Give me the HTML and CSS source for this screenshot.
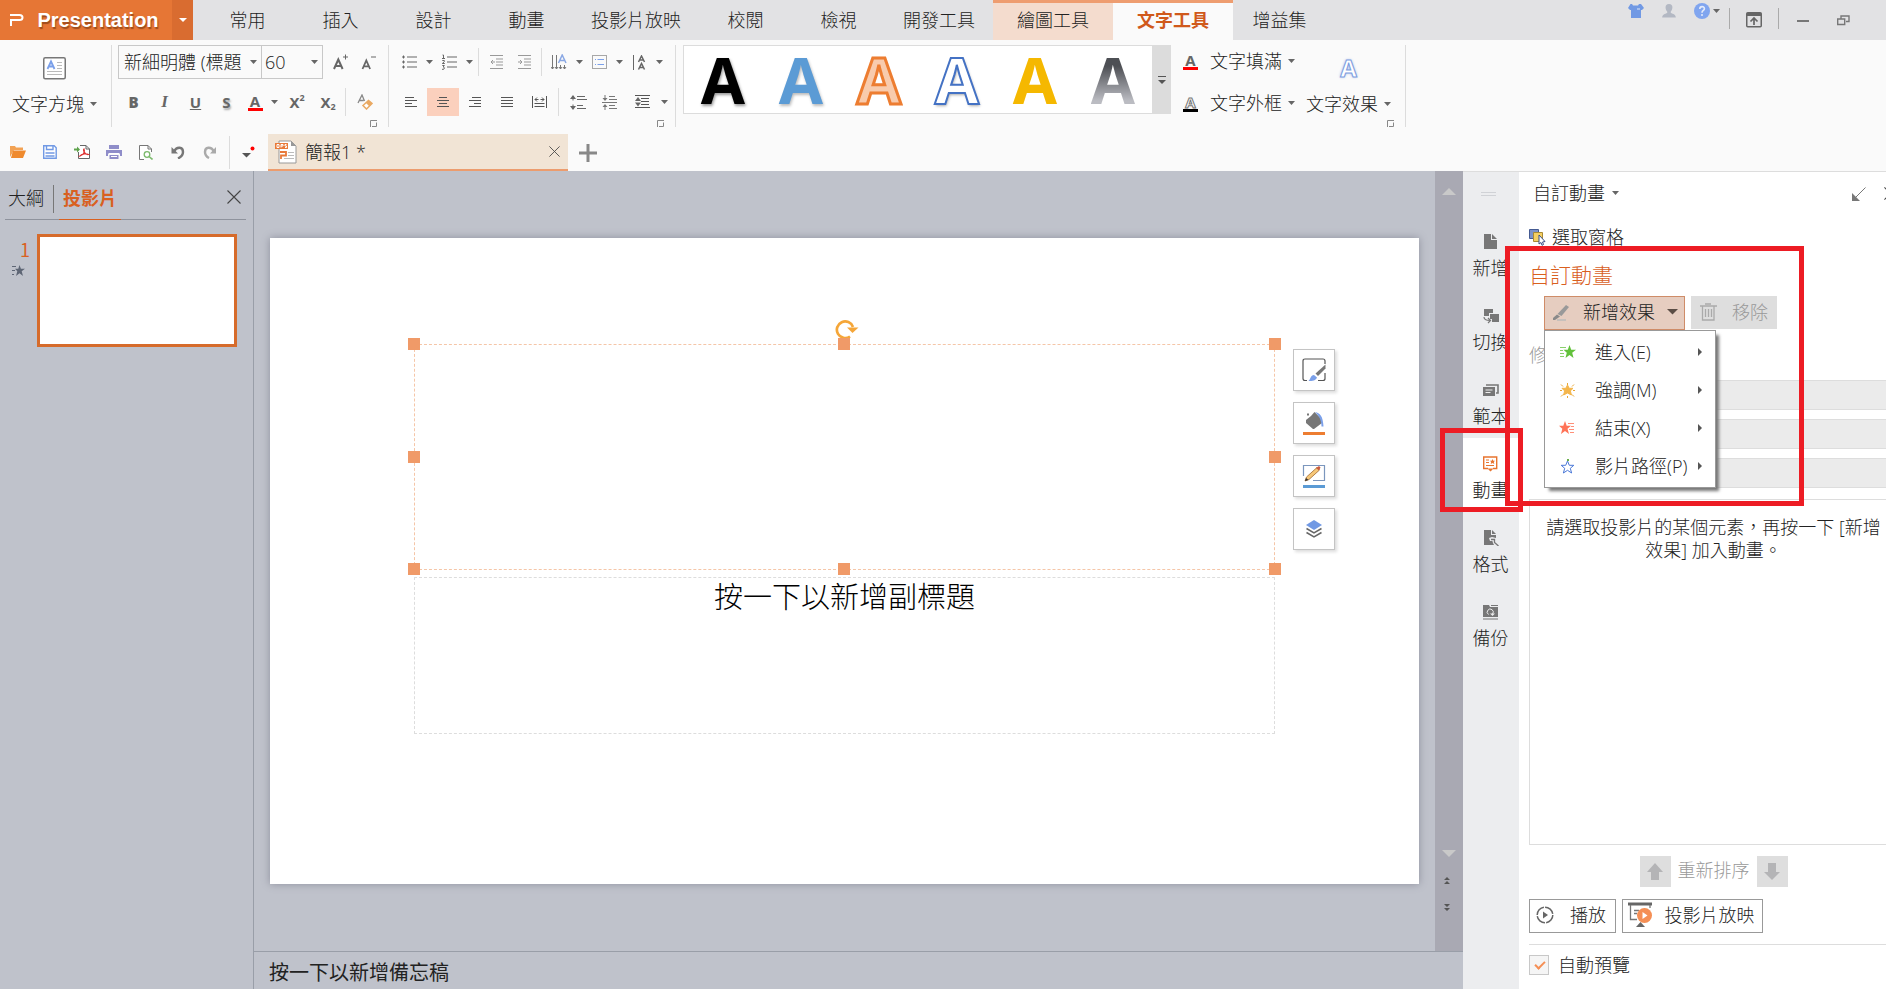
FILE: index.html
```html
<!DOCTYPE html>
<html lang="zh-Hant">
<head>
<meta charset="utf-8">
<title>Presentation</title>
<link rel="stylesheet" href="styles.css">
</head>
<body>
<svg class="sprite" aria-hidden="true">
  <symbol id="caret" viewBox="0 0 7 4"><path d="M0 0h7L3.5 4z" fill="#666"/></symbol>
  <symbol id="launch" viewBox="0 0 7 7"><path d="M.5 7V.5H7M6.5 2.500V6.5H2" fill="none" stroke="#888"/></symbol>
  <symbol id="close" viewBox="0 0 14 14"><path d="M.5.5l13 13M13.5.5l-13 13" fill="none" stroke="#444" stroke-width="1.100"/></symbol>
</svg>

<header class="titlebar">
  <button class="brand"><svg width="16" height="14" viewBox="0 0 16 14"><path d="M1 2h9.500c4 0 4 5 0 5H2v6" fill="none" stroke="#fff" stroke-width="2"/></svg><span>Presentation</span></button>
  <button class="brand-more" aria-label="選單"><svg width="8" height="4" viewBox="0 0 8 4"><path d="M0 0h8L4 4z" fill="#fff"/></svg></button>
  <nav class="tabs">
    <button class="tab">常用</button>
    <button class="tab">插入</button>
    <button class="tab">設計</button>
    <button class="tab">動畫</button>
    <button class="tab">投影片放映</button>
    <button class="tab">校閱</button>
    <button class="tab">檢視</button>
    <button class="tab">開發工具</button>
    <button class="tab tab-context">繪圖工具</button>
    <button class="tab tab-context tab-active">文字工具</button>
    <button class="tab">增益集</button>
  </nav>
  <div class="window-tools">
    <div class="account">
      <button aria-label="外觀"><svg width="16" height="15" viewBox="0 0 16 15"><path d="M4 0l1 1.500h5L11 0h2l3 4-2 2h-1v8H3V6H2L0 4l2.500-4z" fill="#7199e4"/><path d="M9 5h3" stroke="#dfe6f5"/></svg></button>
      <button aria-label="帳戶"><svg width="14" height="14" viewBox="0 0 14 14"><path d="M7 0c5 0 3.500 6 1.800 7.500V9c2.500.8 5 1.800 5 4.500H.2C.2 10.800 3 9.800 5.200 9V7.500C3.500 6 2 0 7 0z" fill="#b3b8c3"/></svg></button>
      <button class="help" aria-label="說明"><svg width="16" height="16" viewBox="0 0 16 16"><circle cx="8" cy="8" r="8" fill="#80a5ef"/><path d="M5.800 6c0-3.200 4.600-3 4.600-.3C10.400 7.500 8 7.400 8 9.700" fill="none" stroke="#e4ebfa" stroke-width="1.600"/><circle cx="8" cy="12" r="1" fill="#e4ebfa"/></svg><svg width="7" height="4"><use href="#caret"/></svg></button>
    </div>
    <i class="bar"></i>
    <button class="collapse" aria-label="收合功能區"><svg width="16" height="16" viewBox="0 0 16 16"><rect x=".75" y=".75" width="14.500" height="14" rx="1" fill="none" stroke="#666" stroke-width="1.500"/><path d="M1 2.500h14" stroke="#666" stroke-width="3"/><path d="M8 13V7M4.500 9.500L8 6l3.500 3.500" fill="none" stroke="#666" stroke-width="1.700"/></svg></button>
    <i class="bar"></i>
    <button class="minimize" aria-label="最小化"><svg width="12" height="2"><path d="M0 1h12" stroke="#777" stroke-width="2"/></svg></button>
    <button class="restore" aria-label="還原"><svg width="13" height="11" viewBox="0 0 13 11"><path d="M.7 4h7v5.500h-7zM4 3.500V1h8v5.500H9" fill="none" stroke="#777" stroke-width="1.400"/></svg></button>
  </div>
</header>

<section class="ribbon">
  <div class="group group-box">
    <button class="stacked"><svg width="24" height="23" viewBox="0 0 24 23"><rect x=".75" y=".75" width="21.500" height="21" rx="1.500" fill="#fff" stroke="#777" stroke-width="1.500"/><path d="M4.500 12L8 4.500 11.500 12M5.700 9.500h4.600" fill="none" stroke="#7ba0ea" stroke-width="1.800"/><path d="M14 5.500h5M14 8.500h5M14 11.500h5M4 14.500h15M4 17.500h15" stroke="#bbb"/></svg>
    <span class="label">文字方塊<svg width="7" height="4"><use href="#caret"/></svg></span></button>
  </div>

  <div class="group">
    <div class="row row-top">
      <label class="combo combo-font"><select aria-label="字型"><option>新細明體 (標題</option></select><svg width="7" height="4"><use href="#caret"/></svg></label>
      <label class="combo combo-size"><select aria-label="字型大小"><option>60</option></select><svg width="7" height="4"><use href="#caret"/></svg></label>
      <button class="tool narrow pushed" aria-label="放大字型"><svg width="16" height="16" viewBox="0 0 16 16"><path d="M1 15L5.300 5.500 9.600 15M2.800 12h5" fill="none" stroke="#666" stroke-width="2"/><path d="M10 3h5M12.500.5v5" stroke="#666"/></svg></button>
      <button class="tool narrow" aria-label="縮小字型"><svg width="16" height="16" viewBox="0 0 16 16"><path d="M1.500 15L5.300 6.500 9.100 15M3 12.300h4.500" fill="none" stroke="#666" stroke-width="1.800"/><path d="M10 3h5" stroke="#666"/></svg></button>
    </div>
    <div class="row">
      <button class="tool glyph"><b>B</b></button>
      <button class="tool glyph italic"><i>I</i></button>
      <button class="tool glyph"><u>U</u></button>
      <button class="tool glyph shadowed">S</button>
      <button class="tool fontcolor"><span class="swatch swatch-red">A</span></button>
      <button class="arrow" aria-label="字型色彩選項"><svg width="7" height="4"><use href="#caret"/></svg></button>
      <button class="tool glyph script">X<sup>2</sup></button>
      <button class="tool glyph script">X<sub>2</sub></button>
      <i class="sep"></i>
      <button class="tool" aria-label="清除格式"><svg width="16" height="16" viewBox="0 0 16 16"><path d="M1 9L5 1l2.500 6M2.500 6.500h4" fill="none" stroke="#888" stroke-width="1.300"/><path d="M6 11.500l5.500-5 3.500 3-5.500 5.500z" fill="#fff" stroke="#e9a963" stroke-width="1.500"/><path d="M9 9l3.500 3.500L15 9.500 11.500 6.500z" fill="#e9a963"/></svg></button>
    </div>
    <button class="launcher" aria-label="字型設定"><svg width="7" height="7"><use href="#launch"/></svg></button>
  </div>

  <div class="group">
    <div class="row row-top">
      <button class="tool narrow" aria-label="項目符號"><svg width="15" height="14" viewBox="0 0 15 14"><path d="M5 2h10M5 7h10M5 12h10M0 2h3M0 7h3M0 12h3M1.500.5v3M1.500 5.500v3M1.500 10.500v3" stroke="#666"/></svg></button>
      <button class="arrow" aria-label="項目符號選項"><svg width="7" height="4"><use href="#caret"/></svg></button>
      <button class="tool narrow" aria-label="編號"><svg width="15" height="16" viewBox="0 0 15 16"><path d="M5 3h10M5 8h10M5 13h10" stroke="#666"/><path d="M.5 1h1v3.500M0 4.500h3M.3 6.500h2v1.200l-2 1.800h2.500M.3 11.500h2L1.200 13l1.300.8-.8 1.500H0" fill="none" stroke="#666"/></svg></button>
      <button class="arrow" aria-label="編號選項"><svg width="7" height="4"><use href="#caret"/></svg></button>
      <i class="sep"></i>
      <button class="tool narrow" aria-label="減少縮排"><svg width="13" height="14" viewBox="0 0 13 14"><path d="M0 .5h13M6 4h7M6 7h7M6 10h7M0 13.500h13M1 7h4M3 5L1 7l2 2" fill="none" stroke="#999"/></svg></button>
      <button class="tool narrow" aria-label="增加縮排"><svg width="13" height="14" viewBox="0 0 13 14"><path d="M0 .5h13M6 4h7M6 7h7M6 10h7M0 13.500h13M0 7h4M2 5l2 2-2 2" fill="none" stroke="#999"/></svg></button>
      <i class="sep"></i>
      <button class="tool narrow" aria-label="文字方向"><svg width="16" height="16" viewBox="0 0 16 16"><path d="M1.500 1v14M5.500 1v14M9.500 11v4M13.500 11v4M0 13l1.500 2L3 13M4 13l1.500 2L7 13M8 13l1.500 2 1.500-2M12 13l1.500 2 1.500-2" fill="none" stroke="#777"/><path d="M7.500 9l3.700-8L15 9M9 6.500h4.500" fill="none" stroke="#8aa8e4" stroke-width="1.500"/></svg></button>
      <button class="arrow" aria-label="文字方向選項"><svg width="7" height="4"><use href="#caret"/></svg></button>
      <button class="tool narrow" aria-label="對齊文字"><svg width="15" height="14" viewBox="0 0 15 14"><rect x=".5" y=".5" width="14" height="13" fill="none" stroke="#555" stroke-dasharray="1 1"/><path d="M3 4.500h1M5.500 4.500H12M3 9.500h1M5.500 9.500H12" stroke="#7ba0ea"/></svg></button>
      <button class="arrow" aria-label="對齊文字選項"><svg width="7" height="4"><use href="#caret"/></svg></button>
      <button class="tool narrow" aria-label="直書"><svg width="13" height="15" viewBox="0 0 13 15"><path d="M.5 0v15" stroke="#666"/><path d="M5.500 7L8.500 1l3 6M6.500 5h4M5.500 14.500l3-6 3 6M6.500 12.500h4" fill="none" stroke="#666" stroke-width="1.500"/></svg></button>
      <button class="arrow" aria-label="直書選項"><svg width="7" height="4"><use href="#caret"/></svg></button>
    </div>
    <div class="row">
      <button class="tool" aria-label="靠左對齊"><svg width="12" height="11" viewBox="0 0 12 11"><path d="M0 .5h9M0 3.500h12M0 6.500h7M0 9.500h12" stroke="#555"/></svg></button>
      <button class="tool tool-on" aria-label="置中"><svg width="12" height="11" viewBox="0 0 12 11"><path d="M2 .5h8M0 3.500h12M2 6.500h8M0 9.500h12" stroke="#555"/></svg></button>
      <button class="tool" aria-label="靠右對齊"><svg width="12" height="11" viewBox="0 0 12 11"><path d="M3 .5h9M0 3.500h12M5 6.500h7M0 9.500h12" stroke="#555"/></svg></button>
      <button class="tool" aria-label="左右對齊"><svg width="12" height="11" viewBox="0 0 12 11"><path d="M0 .5h12M0 3.500h12M0 6.500h12M0 9.500h12" stroke="#555"/></svg></button>
      <button class="tool" aria-label="分散對齊"><svg width="15" height="12" viewBox="0 0 15 12"><path d="M.5 0v12M14.500 0v12M3 3.500h3.500M8.500 3.500H12M5 1.500L3 3.500l2 2M10 1.500l2 2-2 2M2.500 7.500h10M2.500 10.500h10" fill="none" stroke="#555"/></svg></button>
      <i class="sep"></i>
      <button class="tool" aria-label="行距"><svg width="17" height="15" viewBox="0 0 17 15"><path d="M7 1.500h8M7 4.500h10M7 10.500h6M7 13.500h9M3 1v4.500M3 9.500V14" stroke="#666"/><path d="M0 4l3-4 3 4zM0 11h6l-3 4z" fill="#666"/></svg></button>
      <button class="tool" aria-label="段落間距"><svg width="16" height="15" viewBox="0 0 16 15"><path d="M7 1.500h6M7 4.500h8M7 10.500h6M7 13.500h8M0 7.500h15M3 0v5M3 10v5" stroke="#777"/><path d="M.5 3h5L3 6zM.5 12h5L3 9z" fill="#777"/></svg></button>
      <button class="tool" aria-label="行間"><svg width="15" height="14" viewBox="0 0 15 14"><path d="M0 .5h15M6 3.500h8M6 6.500h8M6 9.500h8M0 12.500h15" stroke="#555"/><path d="M0 6l3-4 3 4zM0 7.500h6l-3 4z" fill="#666"/></svg></button>
      <button class="arrow" aria-label="行距選項"><svg width="7" height="4"><use href="#caret"/></svg></button>
    </div>
    <button class="launcher" aria-label="段落設定"><svg width="7" height="7"><use href="#launch"/></svg></button>
  </div>

  <div class="group">
    <div class="art-area">
      <div class="gallery">
        <div class="gallery-items">
          <button class="art art-black">A</button>
          <button class="art art-blue">A</button>
          <button class="art art-orange">A</button>
          <button class="art art-outline">A</button>
          <button class="art art-gold">A</button>
          <button class="art art-gray"><span>A</span></button>
        </div>
        <button class="gallery-more" aria-label="更多樣式"><svg width="8" height="8" viewBox="0 0 8 8"><path d="M0 .5h8" stroke="#555"/><path d="M0 4h8L4 8z" fill="#555"/></svg></button>
      </div>
      <div class="text-style">
        <button class="line-button"><span class="swatch swatch-red">A</span><span class="label">文字填滿<svg width="7" height="4"><use href="#caret"/></svg></span></button>
        <button class="line-button"><span class="swatch swatch-line">A</span><span class="label">文字外框<svg width="7" height="4"><use href="#caret"/></svg></span></button>
      </div>
      <button class="stacked effects"><span class="glow">A</span><span class="label">文字效果<svg width="7" height="4"><use href="#caret"/></svg></span></button>
    </div>
    <button class="launcher" aria-label="文字效果設定"><svg width="7" height="7"><use href="#launch"/></svg></button>
  </div>
</section>

<section class="docbar">
  <div class="quick">
    <button aria-label="開啟"><svg width="16" height="12" viewBox="0 0 16 12"><path d="M0 11V0h5l1 1.500h7V4H4z" fill="#f2a254"/><path d="M3 4.500h13L13 12H1z" fill="#ef8a2e"/></svg></button>
    <button aria-label="儲存"><svg width="14" height="14" viewBox="0 0 14 14"><path d="M.7.7h10.500l2 2v10.500H.7z" fill="#fff" stroke="#7199e4" stroke-width="1.400"/><path d="M3.500 1v3.500h6.500V1M2.500 8h9M2.500 11h9" fill="none" stroke="#7199e4" stroke-width="1.400"/></svg></button>
    <button aria-label="輸出為 PDF"><svg width="17" height="14" viewBox="0 0 17 14"><path d="M4.500 7v6.500h11V4l-3.500-3.500H6" fill="#fff" stroke="#666"/><path d="M12 .5V4h3.500" fill="none" stroke="#666"/><path d="M6 11c4-1 5-5 4-7-1.500 1 1 6 4.500 5.500C12 8 8 9 6 11z" fill="none" stroke="#d33" stroke-width="1.200"/><path d="M0 4.500h4" stroke="#5ea24c" stroke-width="2"/><path d="M3 1.500L6 4.500 3 7.500z" fill="#5ea24c"/></svg></button>
    <button aria-label="列印"><svg width="16" height="14" viewBox="0 0 16 14"><path d="M3 0h10v4H3zM0 5h16v6h-2V8.500H2V11H0zM3.500 10h9v4h-9z" fill="#8f8dc9"/><path d="M3 8.500h10M5 11.500h6" stroke="#fff"/></svg></button>
    <button aria-label="預覽列印"><svg width="14" height="15" viewBox="0 0 14 15"><path d="M5 14.500H.5V.5H9L12.500 4v3" fill="#fff" stroke="#777"/><path d="M9 .5V4h3.500" fill="none" stroke="#777"/><circle cx="8" cy="9.500" r="2.800" fill="none" stroke="#7cba6c" stroke-width="1.300"/><path d="M10 11.500l3.500 3" stroke="#7cba6c" stroke-width="1.600"/></svg></button>
    <button aria-label="復原"><svg width="14" height="13" viewBox="0 0 14 13"><path d="M3 5.500C6 0 12 1 12 6c0 3-2 5-5 6.500" fill="none" stroke="#777" stroke-width="2.400"/><path d="M.5 1v6.500H7z" fill="#777"/></svg></button>
    <button aria-label="重做"><svg width="14" height="13" viewBox="0 0 14 13"><path d="M11 5.500C8 0 2 1 2 6c0 3 2 5 4 6" fill="none" stroke="#aaa" stroke-width="2.400"/><path d="M13 1v6.500H7z" fill="#aaa"/></svg></button>
    <i class="sep sep-tall"></i>
    <button aria-label="自訂工具列"><svg width="13" height="12" viewBox="0 0 13 12"><path d="M0 7h9l-4.500 4.500z" fill="#555"/><circle cx="10.500" cy="2.500" r="2" fill="red"/></svg></button>
  </div>
  <div class="doc-tab">
    <svg width="22" height="24" viewBox="0 0 22 24"><path d="M4 1h12l5 5v17H4z" fill="#fff" stroke="#999"/><path d="M16 1v5h5z" fill="#999"/><rect x="0" y="3" width="13" height="6" fill="#e87a3a"/><path d="M2 4.500h2v3H2zM6 7.500v-3h2V6H6M11.500 4.500H10V6h1.500v1.500H10" fill="none" stroke="#fff"/><path d="M5 12h6v3.500H6V19" fill="none" stroke="#e87a3a" stroke-width="1.800"/><path d="M13 12.500h6M13 15.500h6M9 18.500h10" stroke="#bbb"/></svg>
    <span class="doc-name">簡報1 *</span>
    <button aria-label="關閉文件"><svg width="11" height="11"><use href="#close"/></svg></button>
  </div>
  <button class="add-doc" aria-label="新增文件"><svg width="18" height="18"><path d="M9 0v18M0 9h18" stroke="#888" stroke-width="3"/></svg></button>
</section>

<main class="body">
  <aside class="slides">
    <div class="slides-head">
      <button class="slides-tab">大綱</button>
      <button class="slides-tab slides-tab-on">投影片</button>
      <button class="slides-close" aria-label="關閉窗格"><svg width="14" height="14"><use href="#close"/></svg></button>
    </div>
    <div class="thumb-row">
      <div class="thumb-meta"><span>1</span><svg width="13" height="11" viewBox="0 0 13 11"><path d="M7.500 0l1.400 3.800H13l-3.300 2.500L11 11 7.500 8.200 4 11l1.300-4.700L3 3.800h3.300z" fill="#5e6675"/><path d="M0 1.500h4M0 5.500h3M0 9.500h2" stroke="#5e6675"/></svg></div>
      <div class="thumb"></div>
    </div>
  </aside>

  <section class="editor">
    <div class="stage">
      <div class="canvas">
        <div class="slide">
          <div class="title-box">
            <svg class="rotate" width="24" height="20" viewBox="0 0 24 20"><path d="M15 17.500A8.300 8.300 0 1 1 18 8" fill="none" stroke="#f5a638" stroke-width="2.700"/><path d="M12 8.500h11.500L17.500 14z" fill="#f5a638"/></svg>
            <i class="handle h-left v-top"></i><i class="handle h-mid v-top"></i><i class="handle h-right v-top"></i>
            <i class="handle h-left v-mid"></i><i class="handle h-right v-mid"></i>
            <i class="handle h-left v-bottom"></i><i class="handle h-mid v-bottom"></i><i class="handle h-right v-bottom"></i>
            <div class="float-tools">
              <button aria-label="樣式"><svg width="24" height="24" viewBox="0 0 24 24"><path d="M5 22.500H3q-2 0-2-2V3q0-2 2-2h18q2 0 2 2v3M23 15v5.500q0 2-2 2h-5" fill="none" stroke="#555" stroke-width="1.200"/><path d="M23.500 6.500v4L16 18l-2.500-2.500z" fill="#777"/><path d="M12 17l3 2.500c-1 3-4.500 3.500-8.500 3.500 2-1.500 2-6 5.500-6z" fill="#7ba0ea"/></svg></button>
              <button aria-label="填滿"><svg width="24" height="24" viewBox="0 0 24 24"><path d="M4 9l5-4 3.500-4L20 8.500V12l-8 6h-1l-7-6z" fill="#777"/><path d="M5 2.500h2v2H5z" fill="#777"/><path d="M13 1c5 1 8 4 8.500 14.500h-2C19.500 10 18 6 13 1z" fill="#7ba0ea"/><path d="M1 22.500h22" stroke="#ed7d31" stroke-width="3"/></svg></button>
              <button aria-label="外框"><svg width="24" height="24" viewBox="0 0 24 24"><path d="M1.500 12V1.500h21v15H11" fill="none" stroke="#7b96bd" stroke-width="1.200"/><path d="M3 17l1.500-4L15 3.500l2.500 2.500L7 15.500z" fill="#f6c778" stroke="#a06a30" stroke-width=".8"/><path d="M14 4L17 2l1.500 1.500L17 6.500z" fill="#c95b3f"/><path d="M3 17l1-3 2.500 2z" fill="#333"/><path d="M1 22.500h22" stroke="#5b9bd5" stroke-width="3"/></svg></button>
              <button aria-label="圖層"><svg width="18" height="18" viewBox="0 0 18 18"><path d="M9 0l8 5-8 5-8-5z" fill="#7199e4"/><path d="M1.500 8.500L9 13l7.500-4.500M1.500 12.500L9 17l7.500-4.500" fill="none" stroke="#666" stroke-width="1.500"/></svg></button>
            </div>
          </div>
          <div class="subtitle-box">按一下以新增副標題</div>
        </div>
      </div>
      <div class="scrollbar">
        <button aria-label="向上捲動"><svg width="14" height="7"><path d="M0 7l7-7 7 7z" fill="#c9c9c9"/></svg></button>
        <div class="scroll-end">
          <button aria-label="向下捲動"><svg width="14" height="7"><path d="M0 0h14L7 7z" fill="#c9c9c9"/></svg></button>
          <button class="step" aria-label="上一張"><svg width="6" height="7"><path d="M0 3l3-3 3 3zM0 7l3-3 3 3z" fill="#555"/></svg></button>
          <button class="step" aria-label="下一張"><svg width="6" height="7"><path d="M0 0h6L3 3zM0 4h6L3 7z" fill="#555"/></svg></button>
        </div>
      </div>
    </div>
    <div class="notes">按一下以新增備忘稿</div>
  </section>

  <div class="dock">
    <nav class="rail">
      <div class="grip"></div>
      <button class="rail-item"><svg width="15" height="16" viewBox="0 0 15 16"><path d="M1 0h7v6h6v9H1zM9 0l5 5H9z" fill="#777"/></svg>新增</button>
      <button class="rail-item"><svg width="16" height="16" viewBox="0 0 16 16"><path d="M1 1h9v4H6v3H1zM7 6h9v8H9v-3H7z" fill="#777"/><path d="M1 9c0 3 2 3.500 6 3.500M5 10l2.500 2.500L5 15" fill="none" stroke="#777" stroke-width="1.200"/></svg>切換</button>
      <button class="rail-item"><svg width="16" height="16" viewBox="0 0 16 16"><path d="M0 5h12v9H0z" fill="#777"/><path d="M3 3h12v8h-2" fill="none" stroke="#777" stroke-width="1.600"/><path d="M2.500 8h7M2.500 10.500h5" stroke="#eee"/></svg>範本</button>
      <button class="rail-item rail-on"><svg width="15" height="16" viewBox="0 0 15 16"><path d="M5 12.500H.7V1h13v11.500H10" fill="none" stroke="#e8742f" stroke-width="1.400"/><path d="M3 4h3M3 6.500h3M3 9.500h8" stroke="#e8742f"/><path d="M9.500 3l.8 1.700H12l-1.200 1.300.5 2-1.800-1-1.800 1 .5-2L7 4.700h1.700zM4.500 12.500h6l-3 3z" fill="#e8742f"/></svg>動畫</button>
      <button class="rail-item"><svg width="16" height="16" viewBox="0 0 16 16"><path d="M1 0h7v5h5v3l-4-1-3 1 1 3h2l2 4H1zM9 0l4 4H9z" fill="#777"/><path d="M8 9.500h3.500v3L15.500 16M7.500 12h2" fill="none" stroke="#777" stroke-width="1.300"/></svg>格式</button>
      <button class="rail-item"><svg width="16" height="16" viewBox="0 0 16 16"><path d="M0 1h6l1 2h8v10H0z" fill="#777"/><path d="M8 1.500h7M0 15h15" stroke="#777"/><path d="M5.500 10.500A3 3 0 1 1 9.500 10" fill="none" stroke="#eee"/><path d="M7 9.500h5l-2.500 2.500z" fill="#eee"/></svg>備份</button>
    </nav>
    <aside class="pane">
      <div class="pane-inner">
        <div class="pane-head">
          <button class="label">自訂動畫<svg width="7" height="4"><use href="#caret"/></svg></button>
          <button class="pin" aria-label="停駐"><svg width="14" height="14" viewBox="0 0 14 14"><path d="M13.500.5L3 11" stroke="#777"/><path d="M0 6l8 8H0z" fill="#777"/></svg></button>
          <button aria-label="關閉"><svg width="13" height="13"><use href="#close"/></svg></button>
        </div>
        <button class="select-pane"><svg width="17" height="17" viewBox="0 0 17 17"><path d="M.5.5h9v9h-9z" fill="#7d92c9" stroke="#445a92"/><path d="M4.500 3.500h9v9h-9z" fill="#f5cf62" stroke="#a98a35"/><path d="M10 6l6 6.500-2.500.5 1 2.500-1.500.8-1-2.800-2 1.500z" fill="#fff" stroke="#3b4f85"/></svg>選取窗格</button>
        <h2 class="pane-title">自訂動畫</h2>
        <div class="actions">
          <div class="add-wrap">
            <button class="add-effect"><svg width="16" height="17" viewBox="0 0 16 17"><path d="M13 1l3 2-7.500 9-4-2z" fill="#999"/><path d="M4 10.500l3 2L2 16H0v-2z" fill="#8a8a8a"/><path d="M4 16h9" stroke="#bbb" stroke-width="1.500"/></svg><span>新增效果</span><svg width="11" height="6"><path d="M0 0h11L5.500 5.500z" fill="#5b4d45"/></svg></button>
            <div class="menu" role="menu">
              <button role="menuitem"><svg width="17" height="14" viewBox="0 0 17 14"><path d="M10.500 0l1.700 4.800H17l-3.800 3L14.500 13l-4-3-4 3 1.300-5.200L4.500 4.800h4.300z" fill="#62c13b"/><path d="M1 2.500h6M1 5.500h3M1 8.500h4M1 11.500h4" stroke="#8ad06c"/></svg><span>進入(E)</span><svg class="sub" width="4" height="8"><path d="M0 0l4 4-4 4z" fill="#555"/></svg></button>
              <button role="menuitem"><svg width="17" height="15" viewBox="0 0 17 15"><path d="M8.500 2l1.700 3.300H14l-2.600 2.600 1 4.100-3.900-2-3.900 2 1-4.100L3 5.300h3.800z" fill="#f4b64c" stroke="#f4b64c"/><path d="M8.500 0v2M1 7.500h2M14 7.500h2M2 1.500l2 2M15 1.500l-2 2M2 13.500l2-2M15 13.500l-2-2M8.500 13v2" stroke="#e9a736"/></svg><span>強調(M)</span><svg class="sub" width="4" height="8"><path d="M0 0l4 4-4 4z" fill="#555"/></svg></button>
              <button role="menuitem"><svg width="17" height="14" viewBox="0 0 17 14"><path d="M6 0l1.700 4.800H12l-3.500 3L10 13 6 10l-4 3 1.300-5.200L0 4.800h4.300z" fill="#ff7458"/><path d="M9 2.500h6M12 5.500h3M10 8.500h5M11 11.500h4" stroke="#ff8f78"/></svg><span>結束(X)</span><svg class="sub" width="4" height="8"><path d="M0 0l4 4-4 4z" fill="#555"/></svg></button>
              <button role="menuitem"><svg width="17" height="15" viewBox="0 0 17 15"><path d="M8.500 2l1.800 4.300h4.500l-3.500 3 1.300 4.700-4.100-2.700L4.400 14l1.300-4.700-3.500-3h4.500z" fill="#fff" stroke="#4a78d8"/><path d="M8 1h2" stroke="#6aaf4a" stroke-width="2"/></svg><span>影片路徑(P)</span><svg class="sub" width="4" height="8"><path d="M0 0l4 4-4 4z" fill="#555"/></svg></button>
            </div>
          </div>
          <button class="remove" disabled><svg width="17" height="18" viewBox="0 0 17 18"><path d="M0 3h17M5 1h6M2.500 3v14h11.500V3M5.500 6v8M8.500 6v8M11.500 6v8" fill="none" stroke="#aaa" stroke-width="1.300"/></svg>移除</button>
        </div>
        <p class="modify">修改</p>
        <div class="fields">
          <input disabled aria-label="開始"><input disabled aria-label="方向"><input disabled aria-label="速度">
        </div>
        <div class="effects-list"><p>請選取投影片的某個元素，再按一下 [新增效果] 加入動畫。</p></div>
        <div class="reorder">
          <button disabled aria-label="上移"><svg width="16" height="18" viewBox="0 0 16 18"><path d="M8 0l8 9h-4v8H4V9H0z" fill="#b4b4b6"/></svg></button>
          <span>重新排序</span>
          <button disabled aria-label="下移"><svg width="16" height="18" viewBox="0 0 16 18"><path d="M8 17l8-8h-4V0H4v9H0z" fill="#b4b4b6"/></svg></button>
        </div>
        <div class="play-row">
          <button class="play"><svg width="18" height="18" viewBox="0 0 18 18"><circle cx="9" cy="9" r="7.800" fill="none" stroke="#666" stroke-width="1.500" stroke-dasharray="11 1.200"/><path d="M7 5.500v7l5-3.500z" fill="#666"/></svg>播放</button>
          <button class="show"><svg width="25" height="26" viewBox="0 0 25 26"><path d="M0 2h24" stroke="#666" stroke-width="3"/><path d="M2.500 3v14.500H9M22 3v3M6 8.500h5M6 11.500h3" fill="none" stroke="#777" stroke-width="1.300"/><path d="M8 25l4.500-5 4.500 5z" fill="#666"/><circle cx="16.500" cy="13.500" r="7.500" fill="#f58f55"/><path d="M14.500 10v7l5-3.500z" fill="#fff"/></svg>投影片放映</button>
        </div>
        <label class="auto"><input type="checkbox" checked>自動預覽</label>
      </div>
    </aside>
    <div class="mark mark-tab"></div>
    <div class="mark mark-menu"></div>
  </div>
</main>
</body>
</html>
```

FILE: styles.css
```css
* { box-sizing: border-box; }

body {
  margin: 0;
  height: 100vh;
  display: flex;
  flex-direction: column;
  overflow: hidden;
  background: #fafafa;
  color: #222;
  font: 300 18px/24px "Open Sans", "Noto Sans CJK TC", sans-serif;
}

button, select, input { font: inherit; color: inherit; }
button { margin: 0; padding: 0; border: 0; background: none; display: flex; align-items: center; justify-content: center; }
svg { display: block; flex: none; }
p, h2 { margin: 0; font-weight: 300; }
.sprite { position: absolute; width: 0; height: 0; }
.label { display: flex; align-items: center; gap: 6px; white-space: nowrap; }

/* title bar */
.titlebar { flex: none; display: flex; height: 40px; background: #e2e2e4; }
.brand { width: 172px; gap: 12px; padding-right: 4px; background: #e67635; color: #fff; font: bold 20px/24px "Liberation Sans", sans-serif; text-shadow: 1px 2px 1px #9d4c1c; }
.brand-more { width: 21px; background: #d96c30; }
.tabs { display: flex; margin-left: 8px; }
.tab { min-width: 93px; padding: 0 18px; white-space: nowrap; }
.tab-context { min-width: 120px; border-top: 3px solid #ee9d70; padding-bottom: 3px; background: #f4dcce; }
.tab-active { background: #fafafa; color: #d0591b; font-weight: bold; }
.window-tools { display: flex; margin-left: auto; padding-right: 36px; }
.account { display: flex; gap: 18px; height: 22px; margin-right: 9px; }
.help { gap: 3px; }
.bar { width: 1px; height: 21px; margin: 8px 16px 0 0; background: #aaa; }
.collapse { margin-right: 16px; }
.minimize { margin: 2px 28px 0 2px; }

/* ribbon */
.ribbon { flex: none; display: flex; padding: 5px 0 7px; }
.group { display: flex; flex-direction: column; height: 82px; padding-left: 6px; border-right: 1px solid #dcdcdc; }
.group-box { padding: 0 14px 0 12px; }
.stacked { flex-direction: column; gap: 12px; padding-top: 12px; }
.row { display: flex; align-items: center; height: 28px; padding-right: 5px; }
.row-top { height: 34px; margin-bottom: 9px; }
.combo { display: flex; align-items: center; height: 34px; border: 1px solid #c8c8c8; background: #fafafa; }
.combo select { flex: 1; min-width: 0; height: 32px; padding: 0 0 0 5px; border: 0; background: none; appearance: none; }
.combo svg { margin: 0 4px; }
.combo-font { width: 144px; }
.combo-size { width: 62px; margin-left: -1px; }
.combo-size select { padding-left: 3px; }
.tool { width: 32px; height: 28px; }
.narrow { width: 28px; }
.pushed { margin-left: 4px; }
.tool-on { background: #fbd0bd; }
.arrow { width: 12px; height: 28px; }
.sep { width: 1px; height: 28px; margin: 0 3px; background: #dcdcdc; }
.glyph { width: 31px; color: #666; font: bold 15px/20px "Noto Sans", sans-serif; }
.italic { font-family: "Liberation Serif", serif; font-size: 17px; }
.script { padding-left: 3px; }
.glyph sup, .glyph sub { font-size: 9px; line-height: 9px; }
.glyph sup { align-self: flex-start; margin-top: 5px; }
.glyph sub { align-self: flex-end; margin-bottom: 5px; }
.shadowed { text-shadow: 1px 2px 2px #aaa; }
.fontcolor { width: 26px; }
.swatch { width: 15px; border-bottom: 3px solid #000; color: #666; text-align: center; font: bold 15px/14px "Noto Sans", sans-serif; }
.swatch-red { border-color: red; }
.swatch-line { color: #fff; -webkit-text-stroke: 1px #777; }
.launcher { align-self: flex-end; margin: 4px 11px 0 0; }

.art-area { display: flex; height: 71px; padding-right: 14px; }
.gallery { display: flex; margin-left: 1px; height: 69px; border: 1px solid #dcdcdc; border-right: 0; background: #fff; }
.gallery-items { display: flex; }
.gallery-more { width: 19px; background: #dcdcdc; }
.art { flex: none; width: 78px; height: 67px; font: bold 64px/67px "Noto Sans", sans-serif; }
.art-black { color: #000; text-shadow: 1px 2px 3px #999; }
.art-blue { color: #5b9bd5; text-shadow: 1px 2px 3px #bbb; }
.art-orange { color: #f8cbad; -webkit-text-stroke: 3px #ed7d31; }
.art-outline { color: #fff; -webkit-text-stroke: 2px #4472c4; text-shadow: 1px 2px 3px #aaa; }
.art-gold { color: #f5b800; }
.art-gray span { background: linear-gradient(#4d4f54 30%, #bbbcc2 82%); background-clip: text; color: transparent; }
.text-style { display: flex; flex-direction: column; gap: 18px; margin: 4px 0 0 12px; }
.line-button { gap: 12px; height: 24px; }
.effects { margin-left: 11px; gap: 13px; padding-top: 12px; }
.glow { color: #fff; font: bold 24px/22px "Noto Sans", sans-serif; -webkit-text-stroke: 1px #7c9ce0; text-shadow: 0 0 3px #8fa9e0; }

/* document bar */
.docbar { flex: none; display: flex; height: 37px; }
.quick { display: flex; width: 268px; padding: 0 0 1px 2px; }
.quick button { width: 32px; }
.sep-tall { height: 33px; margin: 2px 2px 0 3px; }
.doc-tab { display: flex; align-items: center; width: 300px; padding: 0 8px 0 7px; background: #f1e4d5; border-bottom: 2px solid #ec9c6e; }
.doc-name { flex: 1; margin-left: 8px; }
.add-doc { margin-left: 11px; }

/* body */
.body { flex: 1; min-height: 0; display: flex; background: #bfc2cb; }
.slides { flex: none; width: 254px; border-right: 1px solid #999ea8; }
.slides-head { display: flex; height: 49px; margin: 0 7px 14px 5px; border-bottom: 1px solid #8f939d; }
.slides-tab { padding: 5px 9px 0 3px; }
.slides-tab-on { position: relative; padding: 5px 4px 0 10px; color: #d9601f; font-weight: bold; }
.slides-tab-on::before { content: ""; position: absolute; left: 0; top: 14px; height: 28px; border-left: 1px solid #777; }
.slides-tab-on::after { content: ""; position: absolute; left: 6px; right: 0; bottom: -1px; height: 1px; background: #d9601f; }
.slides-close { margin: 4px 5px 0 auto; }
.thumb-row { display: flex; }
.thumb-meta { width: 37px; padding: 3px 7px 0 12px; text-align: right; color: #d9601f; font-family: "Noto Sans CJK TC", sans-serif; font-weight: 400; }
.thumb-meta svg { margin-top: 4px; }
.thumb { width: 200px; height: 113px; border: 3px solid #d66b2b; background: #fff; }

.editor { flex: 1; min-width: 0; display: flex; flex-direction: column; }
.stage { flex: 1; min-height: 0; display: flex; }
.canvas { flex: 1; display: flex; align-items: center; padding: 0 16px; }
.slide { position: relative; width: 100%; aspect-ratio: 16 / 9; background: #fff; box-shadow: 0 0 8px #8d8f9c; }
.title-box { position: absolute; left: 12.5%; top: 16.4%; width: 75%; height: 35%; border: 1px dashed #f5c6a8; }
.subtitle-box { position: absolute; left: 12.5%; top: 52.5%; width: 75%; height: 24.3%; border: 1px dashed #ddd; color: #000; text-align: center; font: 300 29px/34px "Noto Sans CJK TC", sans-serif; }
.handle { position: absolute; width: 12px; height: 12px; background: #f09a68; }
.h-left { left: -7px; }
.h-mid { left: calc(50% - 7px); }
.h-right { right: -7px; }
.v-top { top: -7px; }
.v-mid { top: calc(50% - 6px); }
.v-bottom { bottom: -6px; }
.rotate { position: absolute; left: calc(50% - 10px); top: -26px; }
.float-tools { position: absolute; left: 100%; top: 4px; margin-left: 19px; display: grid; gap: 11px; }
.float-tools button { width: 42px; height: 42px; border: 1px solid #c4c4c4; background: #fff; box-shadow: 2px 2px 3px #ddd; }
.scrollbar { display: flex; flex-direction: column; justify-content: space-between; align-items: center; width: 28px; padding: 17px 0 40px; background: #a9a9b3; }
.scroll-end { display: flex; flex-direction: column; align-items: center; gap: 20px; }
.step { margin-right: 4px; }
.notes { flex: none; height: 38px; padding: 7px 15px; border-top: 1px solid #999ea8; font-size: 20px; line-height: 28px; font-weight: 400; }

/* right dock */
.dock { flex: none; position: relative; display: flex; }
.rail { width: 56px; background: #ecedef; border-top: 1px solid #ddd; }
.grip { height: 4px; margin: 20px 23px 20px 18px; border: solid #d0d2d6; border-width: 1px 0; }
.rail-item { flex-direction: column; justify-content: flex-start; gap: 6px; width: 55px; height: 74px; padding-top: 18px; }
.rail-on { background: #fff; }
.pane { width: 367px; overflow: hidden; background: #fff; border-top: 1px solid #ddd; }
.pane-inner { width: 379px; height: 100%; padding: 0 0 12px 10px; display: flex; flex-direction: column; }
.pane-head { display: flex; align-items: center; height: 42px; padding-left: 4px; margin-right: 1px; }
.pane-head .label { gap: 7px; }
.pin { margin: 2px 18px 0 auto; }
.select-pane { align-self: flex-start; gap: 6px; height: 24px; margin-top: 11px; }
.pane-title { margin-top: 11px; color: #d9601f; font-size: 21px; line-height: 30px; }
.actions { display: flex; gap: 6px; margin: 6px 0 0 15px; }
.add-wrap { position: relative; width: 141px; }
.add-effect { width: 141px; height: 34px; gap: 12px; padding: 0 0 2px 2px; border: 1px solid #cf8c68; background: #e6cdc0; }
.add-effect span { margin-left: 2px; }
.remove { width: 86px; height: 33px; gap: 15px; padding-bottom: 2px; background: #dedede; color: #999; }
.menu { position: absolute; z-index: 2; top: 34px; left: 0; width: 172px; padding: 2px 0; border: 1px solid #999; background: #fff; box-shadow: 4px 4px 3px -1px #777; }
.menu button { width: 170px; height: 38px; justify-content: flex-start; padding: 0 14px; white-space: nowrap; }
.menu span { margin-left: 19px; }
.menu .sub { position: absolute; right: 13px; }
.modify { margin-top: 13px; color: #999; }
.fields { display: grid; gap: 9px; margin: 13px 0 11px 60px; }
.fields input { width: 100%; height: 30px; border: 1px solid #ddd; border-radius: 0; background: #ebebeb; }
.effects-list { flex: 1; padding: 16px 15px; border: 1px solid #ddd; line-height: 23px; text-align: center; }
.reorder { display: flex; justify-content: center; gap: 7px; margin: 11px 0 12px; color: #999; line-height: 28px; }
.reorder button { width: 31px; height: 31px; background: #dedede; }
.play-row { display: flex; gap: 6px; padding-bottom: 11px; border-bottom: 1px solid #ddd; }
.play-row button { height: 34px; padding: 0 3px 2px 0; border: 1px solid #999; }
.play { width: 87px; gap: 16px; }
.show { width: 141px; gap: 12px; }
.auto { display: flex; align-items: center; gap: 9px; margin-top: 8px; }
.auto input { appearance: none; position: relative; width: 20px; height: 20px; margin: 0; border: 1px solid #c8c8c8; background: #f5f5f5; }
.auto input::after { content: ""; position: absolute; left: 5px; top: 5px; width: 8px; height: 4px; border: solid #f58f55; border-width: 0 0 2px 2px; transform: rotate(-45deg); }

/* callouts */
.mark { position: absolute; z-index: 3; border: 5px solid #ed1c24; pointer-events: none; }
.mark-tab { left: -23px; top: 257px; width: 83px; height: 84px; }
.mark-menu { left: 42px; top: 75px; width: 299px; height: 260px; }
```
